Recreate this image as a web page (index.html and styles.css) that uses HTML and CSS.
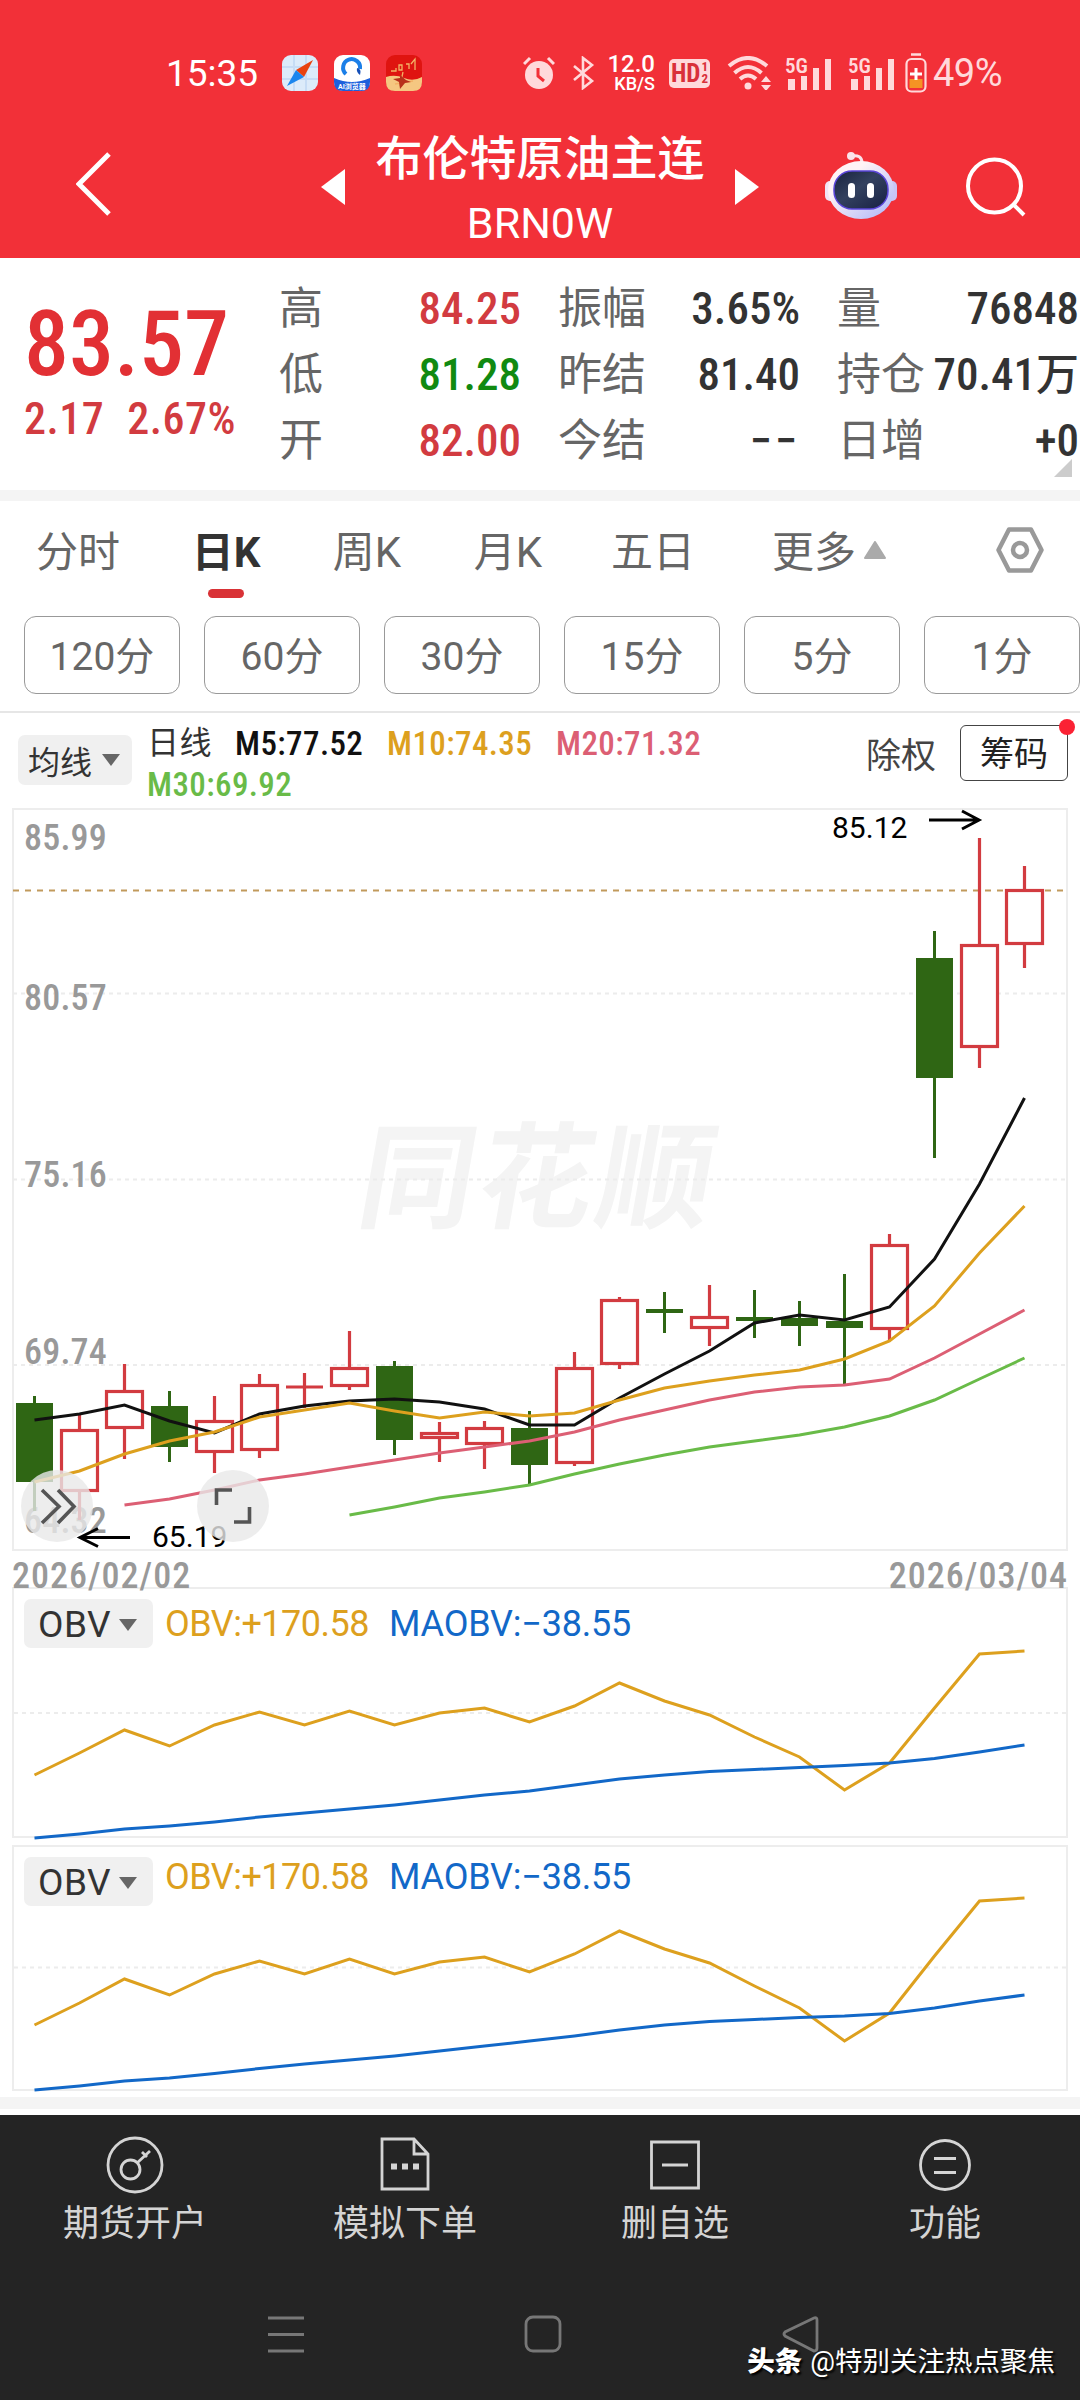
FILE: index.html
```html
<!DOCTYPE html>
<html lang="zh-CN">
<head>
    <meta charset="UTF-8">
    <meta name="viewport" content="width=device-width, initial-scale=1.0">
    <title>布伦特原油主连 BRN0W</title>
    <link rel="stylesheet" href="styles.css">
</head>
<body>
    <div class="top">
        <div class="status-bar">
            <span class="clock">15:35</span>
            <svg class="app-icon" viewBox="0 0 36 36">
                <rect width="36" height="36" rx="9" fill="#dcebfa"/>
                <path d="M12 0v36M24 0v36M0 12h36M0 24h36" stroke="#c6dcf5" stroke-width="2"/>
                <path d="M31 5L14 15L22 22Z" fill="#e8420f"/>
                <path d="M5 31L14 15L22 22Z" fill="#1b86ee"/>
            </svg>
            <svg class="app-icon" viewBox="0 0 36 36">
                <rect width="36" height="36" rx="9" fill="#fff"/>
                <path d="M0 23Q18 31 36 23V27Q36 36 27 36H9Q0 36 0 27Z" fill="#1d5fdc"/>
                <path d="M12 19A8.500 8.500 0 1 1 26 14" fill="none" stroke="#1b7fe8" stroke-width="4"/>
                <path d="M23 13Q28 14 26 20Q22 17 23 13Z" fill="#1550b8"/>
                <text x="18" y="34" class="app-text">AI浏览器</text>
            </svg>
            <svg class="app-icon" viewBox="0 0 36 36">
                <rect width="36" height="36" rx="9" fill="#df1410"/>
                <path d="M0 22Q9 19 18 23T36 22V27Q36 36 27 36H9Q0 36 0 27Z" fill="#f5c781"/>
                <path d="M5 16h5v-3M13 10h3v5h-3zM20 9h3v5M25 9l4-5v11M17 17l-3 14M9 29l18-3" fill="none" stroke="#f3b165" stroke-width="1.300"/>
                <path d="M14 20l6 5 5 2-6 1-5 6-1-7-6-3 7-1z" fill="#b8301b"/>
            </svg>
            <div class="status-right">
                <svg class="i-alarm" viewBox="0 0 32 34">
                    <circle cx="16" cy="19" r="14" fill="#ffd9db"/>
                    <path d="M1 8l6-6M31 8l-6-6" stroke="#ffd9db" stroke-width="3"/>
                    <path d="M15 12v8l6 5" fill="none" stroke="#f23038" stroke-width="3"/>
                </svg>
                <svg class="i-bt" viewBox="0 0 22 34">
                    <path d="M1 10L19 25L10 32V2L19 9L1 24" fill="none" stroke="#ffd9db" stroke-width="2.600"/>
                </svg>
                <div class="speed"><b>12.0</b><b>KB/S</b></div>
                <div class="hd">HD<span><i>1</i><i>2</i></span></div>
                <svg class="i-wifi" viewBox="0 0 46 34">
                    <path d="M2 10Q21 -6 40 10M7.500 17Q21 5 34.500 17M13 23Q21 16 29 23" fill="none" stroke="#ffd9db" stroke-width="4"/>
                    <circle cx="21" cy="30" r="3.500" fill="#ffd9db"/>
                    <path d="M34 26l5-6 5 6zM34 29l5 6 5-6z" fill="#ffd9db"/>
                </svg>
                <svg class="i-sig" viewBox="0 0 46 34">
                    <text x="0" y="17" class="sig-text">5G</text>
                    <path d="M3 23h7v11H3zM16 20h6v14h-6zM28 12h6v22h-6zM40 3h6v31h-6z" fill="#ffd9db"/>
                </svg>
                <svg class="i-sig" viewBox="0 0 46 34">
                    <text x="0" y="17" class="sig-text">5G</text>
                    <path d="M3 23h7v11H3zM16 20h6v14h-6zM28 12h6v22h-6zM40 3h6v31h-6z" fill="#ffd9db"/>
                </svg>
                <svg class="i-batt" viewBox="0 0 22 40">
                    <path d="M6 1.500h10" stroke="#ffd9db" stroke-width="2.500"/>
                    <rect x="1.500" y="6" width="19" height="32.500" rx="5" fill="none" stroke="#ffd9db" stroke-width="2.200"/>
                    <path d="M4.500 26h13v9h-13z" fill="#f59324"/>
                    <path d="M11 15v12M5 21h12" stroke="#fff" stroke-width="3"/>
                </svg>
                <span class="percent">49%</span>
            </div>
        </div>
        <div class="header">
            <svg class="back" viewBox="0 0 36 64"><path d="M33 2L3 32L33 62" fill="none" stroke="#fff" stroke-width="5"/></svg>
            <svg class="tri-left" viewBox="0 0 24 36"><path d="M24 0v36L0 18z" fill="#fff"/></svg>
            <div class="title">
                <h1>布伦特原油主连</h1>
                <p>BRN0W</p>
            </div>
            <svg class="tri-right" viewBox="0 0 24 36"><path d="M0 0v36L24 18z" fill="#fff"/></svg>
            <svg class="robot" viewBox="0 0 72 68">
                <defs>
                    <linearGradient id="shell" x1="0" y1="0" x2="1" y2="1">
                        <stop offset="0.3" stop-color="#fff3f6"/>
                        <stop offset="1" stop-color="#aab4fa"/>
                    </linearGradient>
                    <linearGradient id="face" x1="0" y1="0" x2="1" y2="1">
                        <stop offset="0" stop-color="#18223e"/>
                        <stop offset="0.450" stop-color="#33415f"/>
                        <stop offset="1" stop-color="#161f42"/>
                    </linearGradient>
                </defs>
                <path d="M26 5Q37 3 37 12" fill="none" stroke="#fbe3ea" stroke-width="3"/>
                <circle cx="26" cy="5" r="4" fill="#fbe3ea"/>
                <rect x="0" y="30" width="12" height="20" rx="5" fill="#f1e4f5"/>
                <rect x="60" y="30" width="12" height="20" rx="5" fill="#c9c5f6"/>
                <ellipse cx="36" cy="39" rx="33" ry="29" fill="url(#shell)"/>
                <rect x="9" y="20" width="54" height="38" rx="18" fill="url(#face)" stroke="#5a45d8" stroke-width="1.500"/>
                <rect x="23" y="32" width="7" height="15" rx="3.500" fill="#fff"/>
                <rect x="42" y="32" width="7" height="15" rx="3.500" fill="#fff"/>
            </svg>
            <svg class="search" viewBox="0 0 60 60"><circle cx="28.500" cy="29" r="26.500" fill="none" stroke="#fff" stroke-width="4"/><path d="M47 47l11 11" stroke="#fff" stroke-width="4"/></svg>
        </div>
    </div>

    <div class="quote">
        <div class="price">
            <div class="last">83.57</div>
            <div class="change"><span>2.17</span><span>2.67%</span></div>
        </div>
        <div class="stats">
            <div><label>高</label><b class="red">84.25</b></div>
            <div><label>振幅</label><b>3.65%</b></div>
            <div><label>量</label><b>76848</b></div>
            <div><label>低</label><b class="green">81.28</b></div>
            <div><label>昨结</label><b>81.40</b></div>
            <div><label>持仓</label><b>70.41<span class="unit">万</span></b></div>
            <div><label>开</label><b class="red">82.00</b></div>
            <div><label>今结</label><b class="dashes">−−</b></div>
            <div><label>日增</label><b>+0</b></div>
        </div>
        <div class="corner"></div>
    </div>

    <div class="tabs">
        <div>分时</div>
        <div class="active">日K</div>
        <div>周K</div>
        <div>月K</div>
        <div>五日</div>
        <div class="more">更多<svg viewBox="0 0 22 18"><path d="M11 1L21 17H1Z" fill="#aaa" stroke="#aaa" stroke-width="2" stroke-linejoin="round"/></svg></div>
        <svg class="setting" viewBox="0 0 48 46">
            <path d="M13 2.500H35L45.500 23L35 43.500H13L2.500 23Z" fill="none" stroke="#999" stroke-width="4.500" stroke-linejoin="round"/>
            <circle cx="24" cy="23" r="7" fill="none" stroke="#999" stroke-width="4.500"/>
        </svg>
    </div>

    <div class="periods">
        <button>120分</button>
        <button>60分</button>
        <button>30分</button>
        <button>15分</button>
        <button>5分</button>
        <button>1分</button>
    </div>

    <div class="ma-bar">
        <div class="tag">均线<i class="down"></i></div>
        <div class="ma-list">
            <span class="day">日线</span>
            <span class="m5">M5:77.52</span>
            <span class="m10">M10:74.35</span>
            <span class="m20">M20:71.32</span>
            <span class="m30">M30:69.92</span>
        </div>
        <span class="adjust">除权</span>
        <div class="chips">筹码<i></i></div>
    </div>

    <svg class="k-chart" id="kChart" viewBox="0 800 1080 756">
        <rect x="13" y="809" width="1054" height="741" class="frame"/>
        <text x="355" y="1219" class="mark" transform="translate(214 0) skewX(-10)">同花顺</text>
        <path d="M13 993.500H1067M13 1179.500H1067M13 1365H1067" class="grid"/>
        <path d="M13 890.500H1067" class="now"/>
        <g class="scale">
            <text x="24" y="850">85.99</text>
            <text x="24" y="1010">80.57</text>
            <text x="24" y="1187">75.16</text>
            <text x="24" y="1364">69.74</text>
            <text x="24" y="1533">64.32</text>
        </g>
        <g id="candles"></g>
        <g id="maLines"></g>
        <path d="M929 820H978M962 811L979 820L962 829" class="arrow"/>
        <text x="832" y="838" class="peak">85.12</text>
        <path d="M130 1537.500H81M98 1528.500L80 1537.500L98 1546.500" class="arrow"/>
        <text x="152" y="1547" class="peak">65.19</text>
        <circle cx="57" cy="1506" r="36" class="round"/>
        <path d="M42 1490L59 1506.500L42 1523M58 1490L74 1506.500L58 1523" class="round-icon"/>
        <circle cx="233" cy="1506" r="36" class="round"/>
        <path d="M216.500 1505V1490H232M249.500 1507V1522H234" class="round-icon"/>
    </svg>
    <div class="dates"><span>2026/02/02</span><span>2026/03/04</span></div>

    <div class="panel">
        <div class="panel-head">
            <div class="tag">OBV<i class="down"></i></div>
            <span class="obv">OBV:+170.58</span>
            <span class="maobv">MAOBV:−38.55</span>
        </div>
        <svg id="obv1" viewBox="14 1648 1052 189"><path d="M14 1713H1066" class="grid"/></svg>
    </div>
    <div class="panel second">
        <div class="panel-head">
            <div class="tag">OBV<i class="down"></i></div>
            <span class="obv">OBV:+170.58</span>
            <span class="maobv">MAOBV:−38.55</span>
        </div>
        <svg id="obv2" viewBox="14 1906 1052 184"><path d="M14 1967.500H1066" class="grid"/></svg>
    </div>

    <div class="strip"></div>
    <div class="bottom">
        <div class="menu">
            <div>
                <svg viewBox="0 0 60 60"><circle cx="30" cy="30" r="27"/><circle cx="25.500" cy="34.500" r="9.500"/><path d="M32 28L45 16M37 17l5 5"/></svg>
                期货开户
            </div>
            <div>
                <svg viewBox="0 0 60 60"><path d="M7 4H39L53 19V54H7ZM39 4V19H53"/><path d="M16 31.500h6M27 31.500h6M38 31.500h6" class="dots"/></svg>
                模拟下单
            </div>
            <div>
                <svg viewBox="0 0 60 60"><path d="M6.500 7H53.500V53H6.500ZM17 30H43"/></svg>
                删自选
            </div>
            <div>
                <svg viewBox="0 0 60 60"><circle cx="30" cy="30" r="24.500"/><path d="M19 23.500H41M19 37.500H41"/></svg>
                功能
            </div>
        </div>
        <div class="nav">
            <svg viewBox="0 0 38 38"><path d="M1 3H37M1 19.500H37M1 36H37"/></svg>
            <svg viewBox="0 0 38 38"><rect x="2" y="2" width="34" height="34" rx="7"/></svg>
            <svg viewBox="0 0 38 38"><path d="M33 3L4 17Q2 19 4 21L33 36Q36 36 36 33V5Q36 2 33 3Z"/></svg>
        </div>
        <div class="credit"><b>头条</b>@特别关注热点聚焦</div>
    </div>
    <script src="chart.js"></script>
</body>
</html>
```
FILE: styles.css
```css
* {
    box-sizing: border-box;
}

body {
    margin: 0;
    width: 1080px;
    height: 2400px;
    overflow: hidden;
    background: #fff;
    color: #333;
    font-family: Roboto, "Noto Sans CJK SC", sans-serif;
}

svg {
    display: block;
    flex: none;
}

.top {
    height: 258px;
    background: #f23038;
    color: #fff;
}

.status-bar {
    display: flex;
    align-items: center;
    height: 96px;
    padding: 50px 0 0 166px;
}

.clock {
    width: 116px;
    font-size: 37px;
    font-weight: 400;
}

.app-icon {
    width: 36px;
    height: 36px;
    margin-right: 16px;
}

.app-text {
    font-size: 7px;
    font-weight: bold;
    fill: #fff;
    text-anchor: middle;
}

.status-right {
    display: flex;
    align-items: center;
    margin-left: 85px;
    color: #ffd9db;
}

.i-alarm {
    width: 32px;
    height: 34px;
    margin-right: 18px;
}

.i-bt {
    width: 22px;
    height: 34px;
    margin-right: 14px;
}

.speed {
    display: flex;
    flex-direction: column;
    align-items: flex-end;
    width: 46px;
    margin-right: 14px;
    color: #fff;
    font-size: 18px;
    line-height: 19px;
}

.speed b {
    font-weight: 500;
}

.speed b:first-child {
    font-size: 24px;
    line-height: 20px;
}

.hd {
    display: flex;
    align-items: center;
    justify-content: center;
    width: 41px;
    height: 29px;
    margin-right: 17px;
    border-radius: 5px;
    background: #ffd9db;
    color: #d9303a;
    font-size: 25px;
    font-weight: bold;
    font-stretch: 75%;
}

.hd span {
    display: flex;
    flex-direction: column;
    margin-left: 1px;
}

.hd i {
    font-size: 13px;
    font-style: normal;
    line-height: 12px;
}

.i-wifi {
    width: 46px;
    height: 34px;
    margin-right: 12px;
}

.i-sig {
    width: 46px;
    height: 34px;
    margin-right: 17px;
    overflow: visible;
}

.i-sig + .i-batt {
    margin-left: -6px;
}

.sig-text {
    font-size: 21px;
    font-weight: 600;
    font-stretch: 75%;
    fill: #ffd9db;
}

.i-batt {
    width: 22px;
    height: 40px;
    margin-right: 6px;
}

.percent {
    font-size: 38px;
    letter-spacing: -0.5px;
}

.header {
    display: flex;
    align-items: flex-start;
    height: 162px;
    padding: 30px 0 0 76px;
}

.back {
    width: 36px;
    height: 64px;
    margin: 26px 209px 0 0;
}

.tri-left,
.tri-right {
    width: 24px;
    height: 36px;
    margin-top: 43px;
}

.title {
    width: 390px;
    padding-top: 2px;
    text-align: center;
}

.title h1 {
    margin: 0;
    font-size: 47px;
    font-weight: 500;
    line-height: 62px;
}

.title p {
    margin: 0;
    font-size: 43px;
    line-height: 67px;
}

.robot {
    width: 72px;
    height: 68px;
    margin: 25px 0 0 66px;
}

.search {
    width: 60px;
    height: 60px;
    margin: 31px 0 0 69px;
}

.quote {
    display: flex;
    position: relative;
    height: 243px;
    border-bottom: 11px solid #f4f4f4;
}

.price {
    width: 279px;
    padding: 34px 0 0 24px;
    color: #e23034;
    font-stretch: 75%;
}

.last {
    font-size: 90px;
    font-weight: 500;
    line-height: 106px;
}

.change {
    display: flex;
    gap: 23px;
    color: #d23b40;
    font-size: 44px;
    font-weight: 500;
    line-height: 42px;
    letter-spacing: 0.5px;
}

.stats {
    display: grid;
    grid-template-columns: repeat(3, 242px);
    grid-auto-rows: 66px;
    column-gap: 37px;
    padding-top: 18px;
}

.stats div {
    display: flex;
    align-items: center;
    justify-content: space-between;
    white-space: nowrap;
}

.stats label {
    color: #666;
    font-size: 44px;
    line-height: 66px;
}

.stats b {
    font-size: 45px;
    font-weight: 500;
    line-height: 66px;
    font-stretch: 75%;
}

.unit {
    font-size: 43px;
}

.dashes {
    letter-spacing: 3px;
}

.red {
    color: #d23b40;
}

.green {
    color: #118a11;
}

.corner {
    position: absolute;
    right: 8px;
    bottom: 13px;
    border-left: 18px solid transparent;
    border-bottom: 18px solid #ccc;
}

.tabs {
    display: grid;
    grid-template-columns: 156px 140px 142px 140px 150px 202px 120px;
    height: 115px;
    padding-top: 20px;
    color: #666;
    font-size: 42px;
    line-height: 64px;
    text-align: center;
}

.tabs .active {
    color: #333;
    font-weight: bold;
}

.tabs .active::after {
    content: "";
    display: block;
    width: 36px;
    height: 9px;
    margin: 4px auto 0;
    border-radius: 5px;
    background: #d93236;
}

.more {
    display: flex;
    justify-content: center;
    gap: 8px;
}

.more svg {
    width: 22px;
    height: 18px;
    margin-top: 20px;
}

.setting {
    width: 48px;
    height: 46px;
    margin: 6px 0 0 66px;
}

.periods {
    display: flex;
    gap: 24px;
    height: 97px;
    padding-left: 24px;
    border-bottom: 2px solid #e6e6e6;
}

.periods button {
    flex: none;
    width: 156px;
    height: 78px;
    padding: 0 0 4px;
    border: 1px solid #999;
    border-radius: 12px;
    background: #fff;
    color: #666;
    font: inherit;
    font-size: 39px;
}

.ma-bar {
    display: flex;
    height: 87px;
    padding-left: 18px;
}

.tag {
    display: flex;
    align-items: center;
    justify-content: center;
    gap: 10px;
    width: 114px;
    height: 50px;
    border-radius: 7px;
    background: #f0f0f0;
    font-size: 32px;
}

.ma-bar .tag {
    margin-top: 22px;
    padding-right: 2px;
}

.down {
    border: 9px solid transparent;
    border-top: 12px solid #666;
    border-bottom: 0;
}

.ma-list {
    display: flex;
    flex-wrap: wrap;
    align-content: flex-start;
    width: 734px;
    padding: 10px 0 0 15px;
    font-size: 33px;
    font-weight: 500;
    line-height: 41px;
    font-stretch: 75%;
    letter-spacing: 0.4px;
}

.day {
    width: 88px;
    font-weight: 400;
    font-size: 32px;
}

.m5 {
    width: 152px;
    color: #111;
}

.m10 {
    width: 169px;
    color: #dda01e;
}

.m20 {
    width: 300px;
    color: #dc5f74;
}

.m30 {
    color: #69bb48;
}

.adjust {
    width: 94px;
    padding-top: 22px;
    color: #444;
    font-size: 35px;
    line-height: 44px;
}

.chips {
    position: relative;
    width: 108px;
    height: 56px;
    margin-top: 12px;
    border: 1px solid #444;
    border-radius: 6px;
    color: #222;
    font-size: 34px;
    line-height: 56px;
    text-align: center;
}

.chips i {
    position: absolute;
    top: -7px;
    right: -8px;
    width: 16px;
    height: 16px;
    border-radius: 50%;
    background: #fb2234;
}

.k-chart {
    width: 1080px;
    height: 756px;
}

.frame {
    fill: none;
    stroke: #ededed;
    stroke-width: 2;
}

.mark {
    font-size: 115px;
    font-weight: 700;
    letter-spacing: 4px;
    fill: #f4f4f4;
}

.grid {
    stroke: #ececec;
    stroke-width: 2;
    stroke-dasharray: 4 4;
}

.now {
    stroke: #c19a5c;
    stroke-width: 2;
    stroke-dasharray: 6 6;
}

.scale {
    fill: #999;
    font-size: 36px;
    font-weight: 500;
    font-stretch: 75%;
    letter-spacing: 0.2px;
}

.up {
    fill: #fff;
    stroke: #d23b40;
    stroke-width: 3.2;
}

.fall {
    fill: #2f6614;
    stroke: #2f6614;
    stroke-width: 3;
}

.line {
    fill: none;
    stroke-width: 3;
}

.arrow {
    fill: none;
    stroke: #000;
    stroke-width: 3;
}

.peak {
    font-size: 30px;
    fill: #000;
}

.round {
    fill: #e8e8e8;
    fill-opacity: 0.8;
}

.round-icon {
    fill: none;
    stroke: #555;
    stroke-width: 3.6;
}

.dates {
    display: flex;
    justify-content: space-between;
    height: 31px;
    padding: 0 12px;
    color: #999;
    font-size: 36px;
    font-weight: 500;
    line-height: 40px;
    font-stretch: 75%;
    letter-spacing: 1px;
}

.panel {
    height: 251px;
    margin: 0 12px 7px;
    border: 2px solid #ededed;
}

.panel.second {
    height: 246px;
    margin-bottom: 6px;
}

.panel svg {
    width: 1052px;
    overflow: visible;
}

.panel-head {
    display: flex;
    align-items: center;
    height: 59px;
    padding: 10px 0 0 10px;
    font-size: 36px;
}

.panel-head .tag {
    width: 129px;
    height: 49px;
    margin-right: 12px;
    padding: 2px 2px 0 0;
    font-size: 37px;
    letter-spacing: 0.5px;
    gap: 8px;
}

.panel-head span {
    padding-top: 1px;
    line-height: 40px;
}

.second .panel-head span {
    margin-top: -11px;
}

.obv {
    width: 224px;
    color: #dda01e;
    letter-spacing: -0.5px;
}

.maobv {
    color: #1268c8;
    letter-spacing: -0.2px;
}

.strip {
    height: 12px;
    margin-bottom: 6px;
    background: #f4f4f4;
}

.bottom {
    position: relative;
    height: 285px;
    background: #242424;
}

.menu {
    display: grid;
    grid-template-columns: repeat(4, 270px);
    padding-top: 20px;
    color: #d4d4d4;
    font-size: 36px;
    line-height: 58px;
    text-align: center;
}

.menu svg {
    width: 60px;
    height: 60px;
    margin: 0 auto;
    fill: none;
    stroke: #d4d4d4;
    stroke-width: 2.8;
}

.menu .dots {
    stroke-width: 6;
}

.nav {
    display: flex;
    gap: 219px;
    padding: 62px 0 0 267px;
}

.nav svg {
    width: 38px;
    height: 38px;
    fill: none;
    stroke: #777;
    stroke-width: 2.8;
}

.credit {
    position: absolute;
    right: 25px;
    bottom: 18px;
    color: #fff;
    font-size: 27.5px;
    line-height: 40px;
    text-shadow: 2px 2px 2px #000;
}

.credit b {
    margin-right: 8px;
    font-weight: 900;
}
```
FILE: chart.js
```js
const START = 34.5;
const STEP = 45;

// [direction, high, body top, body bottom, low]
const candles = [
    ["fall", 1396, 1403, 1482, 1511],
    ["up", 1413, 1429, 1492, 1520],
    ["up", 1364, 1390, 1429, 1459],
    ["fall", 1391, 1406, 1447, 1462],
    ["up", 1396, 1420, 1453, 1473],
    ["up", 1374, 1384, 1451, 1458],
    ["up", 1373, 1387, 1387, 1408],
    ["up", 1331, 1367, 1387, 1390],
    ["fall", 1361, 1366, 1440, 1455],
    ["up", 1422, 1432, 1439, 1462],
    ["up", 1421, 1427, 1445, 1469],
    ["fall", 1411, 1428, 1465, 1484],
    ["up", 1352, 1367, 1464, 1466],
    ["up", 1297, 1299, 1365, 1369],
    ["fall", 1292, 1309, 1313, 1333],
    ["up", 1285, 1316, 1329, 1346],
    ["fall", 1290, 1317, 1321, 1338],
    ["fall", 1301, 1318, 1326, 1346],
    ["fall", 1274, 1321, 1328, 1384],
    ["up", 1234, 1244, 1330, 1341],
    ["fall", 931, 958, 1078, 1158],
    ["up", 838, 944, 1048, 1068],
    ["up", 866, 889, 945, 968]
];

const maLines = [
    { color: "#69bb48", from: 7, y: [1515, 1507, 1498, 1492, 1485, 1474, 1464, 1455, 1447, 1441, 1435, 1427, 1416, 1400, 1379, 1358] },
    { color: "#dc5f74", from: 2, y: [1505, 1499, 1490, 1480, 1474, 1467, 1460, 1453, 1447, 1441, 1432, 1420, 1410, 1400, 1392, 1387, 1385, 1379, 1358, 1334, 1310] },
    { color: "#111111", from: 0, y: [1420, 1414, 1405, 1421, 1433, 1414, 1406, 1401, 1399, 1402, 1409, 1425, 1425, 1398, 1374, 1351, 1323, 1315, 1320, 1307, 1259, 1184, 1098] },
    { color: "#dda01e", from: 0, y: [1482, 1471, 1454, 1441, 1432, 1417, 1410, 1403, 1411, 1418, 1412, 1416, 1413, 1400, 1388, 1381, 1375, 1370, 1359, 1341, 1306, 1253, 1206] }
];

const obv1 = [
    { color: "#dda01e", from: 0, y: [1775, 1753, 1730, 1746, 1725, 1712, 1725, 1711, 1725, 1713, 1708, 1722, 1706, 1683, 1701, 1715, 1737, 1757, 1790, 1763, 1708, 1654, 1651] },
    { color: "#1268c8", from: 0, y: [1838, 1834, 1829, 1826, 1822, 1817, 1813, 1809, 1805, 1800, 1795, 1791, 1785, 1779, 1775, 1771.5, 1769.5, 1767.5, 1765.5, 1763, 1758.5, 1752, 1745] }
];

const obv2 = [
    { color: "#dda01e", from: 0, y: [2025, 2003, 1979, 1995, 1974, 1961, 1974, 1959, 1974, 1962, 1957, 1972, 1954, 1931, 1949, 1963, 1986, 2008, 2041, 2013, 1956, 1901, 1898] },
    { color: "#1268c8", from: 0, y: [2090, 2086, 2081, 2078, 2073.5, 2068.5, 2064, 2060, 2056, 2051, 2046, 2041, 2036, 2030, 2025, 2021.5, 2019.5, 2017.5, 2016, 2013.5, 2008, 2001, 1995] }
];

function drawCandles() {
    let html = "";
    candles.forEach(([type, high, top, bottom, low], i) => {
        const x = START + STEP * i;
        html += `<path class="${type}" d="M${x} ${high}V${low}"/>`;
        if (type === "fall") {
            html += `<rect x="${x - 17}" y="${top + 1.5}" width="34" height="${Math.max(bottom - top - 3, 0.5)}" class="fall"/>`;
        } else if (top === bottom) {
            html += `<path class="up" d="M${x - 18.5} ${top}H${x + 18.5}"/>`;
        } else {
            html += `<rect x="${x - 18}" y="${top + 1.5}" width="36" height="${bottom - top - 3}" class="up"/>`;
        }
    });
    document.getElementById("candles").innerHTML = html;
}

function drawLines(id, lines) {
    const target = document.getElementById(id);
    lines.forEach((line) => {
        const points = line.y.map((y, i) => `${START + STEP * (line.from + i)},${y}`).join(" ");
        target.innerHTML += `<polyline class="line" points="${points}" stroke="${line.color}"/>`;
    });
}

drawCandles();
drawLines("maLines", maLines);
drawLines("obv1", obv1);
drawLines("obv2", obv2);
```
